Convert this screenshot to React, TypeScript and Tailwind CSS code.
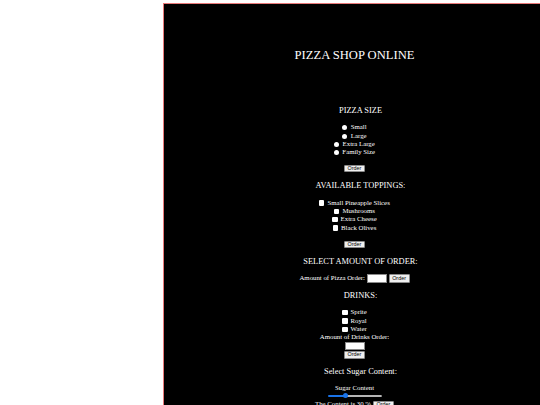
import React from "react";

const serif = "font-['Liberation_Serif',serif]";

function Heading({ children, className = "" }: { children: React.ReactNode; className?: string }) {
    return (
        <h3 className={`h-[10px] pl-[12px] flex items-center text-[8.4px] leading-none font-normal text-white ${className}`}>
            {children}
        </h3>
    );
}

function OrderButton({ className = "" }: { className?: string }) {
    return (
        <button className={`w-[21px] h-[7.3px] flex items-center justify-center bg-[#efefef] border border-[#8a8a8a] rounded-[1px] text-[5.4px] leading-none text-black font-['Liberation_Sans',sans-serif] ${className}`}>
            Order
        </button>
    );
}

function Radio({ label }: { label: string }) {
    return (
        <label className="h-[8.35px] flex items-center gap-[3.4px]">
            <input type="radio" name="size" className="appearance-none w-[5px] h-[5px] rounded-full bg-white m-0" />
            <span>{label}</span>
        </label>
    );
}

function Check({ label }: { label: string }) {
    return (
        <label className="h-[8.35px] flex items-center gap-[3px]">
            <input type="checkbox" className="appearance-none w-[5.3px] h-[5.3px] rounded-[1px] bg-white m-0" />
            <span>{label}</span>
        </label>
    );
}

export default function App() {
    return (
        <div className={`w-[540px] h-[405px] overflow-hidden bg-white ${serif}`}>
            <div className="ml-[163px] mt-[3px] w-[382px] h-[600px] bg-black border-l-[1.5px] border-t-[1.5px] border-[#e87878] flex flex-col items-center text-white text-[6.8px] leading-none">
                <h1 className="mt-[44.5px] h-[14px] flex items-center text-[12.6px] leading-none font-normal">PIZZA SHOP ONLINE</h1>

                <Heading className="mt-[43.5px]">PIZZA SIZE</Heading>
                <div className="mt-[7.6px] flex flex-col items-center">
                    <Radio label="Small" />
                    <Radio label="Large" />
                    <Radio label="Extra Large" />
                    <Radio label="Family Size" />
                </div>
                <OrderButton className="mt-[8.1px]" />

                <Heading className="mt-[8.7px]">AVAILABLE TOPPINGS:</Heading>
                <div className="mt-[7.8px] flex flex-col items-center">
                    <Check label="Small Pineapple Slices" />
                    <Check label="Mushrooms" />
                    <Check label="Extra Cheese" />
                    <Check label="Black Olives" />
                </div>
                <OrderButton className="mt-[8.8px]" />

                <Heading className="mt-[8.7px]">SELECT AMOUNT OF ORDER:</Heading>
                <div className="mt-[7.3px] h-[8.7px] flex items-center gap-[1.8px]">
                    <span>Amount of Pizza Order:</span>
                    <input type="text" className="w-[20px] h-[8.7px] bg-white border border-[#8a8a8a] m-0" />
                    <OrderButton className="h-[8.5px]" />
                </div>

                <Heading className="mt-[8px]">DRINKS:</Heading>
                <div className="mt-[7.5px] flex flex-col items-center">
                    <Check label="Sprite" />
                    <Check label="Royal" />
                    <Check label="Water" />
                </div>
                <div className="h-[8.3px] flex items-center">Amount of Drinks Order:</div>
                <input type="text" className="w-[20px] h-[8.3px] bg-white border border-[#8a8a8a] m-0" />
                <OrderButton className="mt-[0.9px] h-[7.5px]" />

                <Heading className="mt-[8.5px]">Select Sugar Content:</Heading>
                <div className="mt-[7.3px] h-[8px] flex items-center">Sugar Content</div>
                <div className="mt-[0.7px] h-[6px] w-[54px] flex items-center">
                    <div className="w-[17.6px] h-[2px] bg-[#1a73e8] rounded-l-full" />
                    <div className="w-[5px] h-[5px] -mx-[2.5px] rounded-full bg-[#1a73e8] z-10" />
                    <div className="flex-1 h-[2px] bg-[#efefef] border border-[#b5b5b5] rounded-r-full" />
                </div>
                <div className="mt-[1px] h-[9px] flex items-center gap-[2px]">
                    <span>The Content is 30 %</span>
                    <OrderButton />
                </div>
            </div>
        </div>
    );
}
